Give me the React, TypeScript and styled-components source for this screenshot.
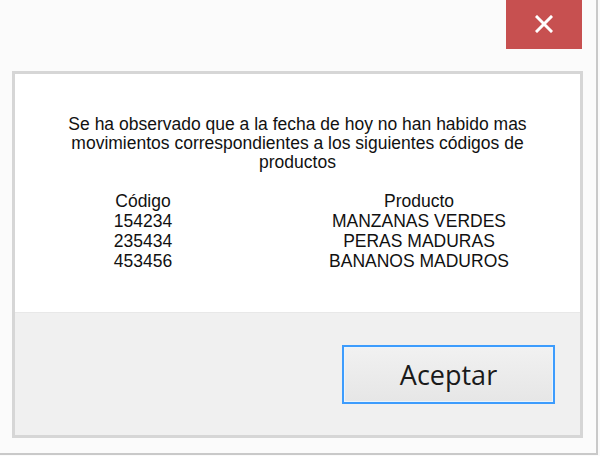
import React from "react";
import styled, { createGlobalStyle } from "styled-components";

const GlobalStyle = createGlobalStyle`
  html, body {
    margin: 0;
    padding: 0;
    background: #fbfbfb;
  }
  body {
    width: 600px;
    height: 456px;
    overflow: hidden;
  }
`;

const rows = [
  { code: "154234", product: "MANZANAS VERDES" },
  { code: "235434", product: "PERAS MADURAS" },
  { code: "453456", product: "BANANOS MADUROS" },
];

const App = () => {
  return (
    <>
      <GlobalStyle />
      <Window>
        <TitleBar>
          <CloseButton aria-label="Cerrar">
            <svg width="18" height="18" viewBox="0 0 18 18">
              <path
                d="M2 2 L16 16 M16 2 L2 16"
                stroke="#fff"
                strokeWidth="3"
                strokeLinecap="square"
              />
            </svg>
          </CloseButton>
        </TitleBar>
        <Panel>
          <MessageArea>
            <Message>
              Se ha observado que a la fecha de hoy no han habido mas
              <br />
              movimientos correspondientes a los siguientes códigos de
              <br />
              productos
            </Message>
            <Table>
              <CodeCell>Código</CodeCell>
              <ProductCell>Producto</ProductCell>
              {rows.map((r) => (
                <React.Fragment key={r.code}>
                  <CodeCell>{r.code}</CodeCell>
                  <ProductCell>{r.product}</ProductCell>
                </React.Fragment>
              ))}
            </Table>
          </MessageArea>
          <Footer>
            <AcceptButton>Aceptar</AcceptButton>
          </Footer>
        </Panel>
      </Window>
    </>
  );
};

export default App;

const Window = styled.div`
  width: 596px;
  height: 453px;
  border-right: 2px solid #c9c9c9;
  border-bottom: 2px solid #c9c9c9;
  background: #fbfbfb;
  box-sizing: content-box;
`;

const TitleBar = styled.div`
  height: 48px;
  display: flex;
  justify-content: flex-end;
  padding-right: 14px;
`;

const CloseButton = styled.div`
  width: 76px;
  height: 49px;
  background: #c75050;
  display: flex;
  align-items: center;
  justify-content: center;
  padding-bottom: 2px;
  box-sizing: border-box;
`;

const Panel = styled.div`
  margin: 23px 0 0 12px;
  width: 571px;
  height: 367px;
  box-sizing: border-box;
  border: 3px solid #d6d6d6;
  display: flex;
  flex-direction: column;
`;

const MessageArea = styled.div`
  height: 239px;
  background: #fff;
  border-bottom: 1px solid #e8e8e8;
  padding-top: 41px;
  box-sizing: border-box;
  font-family: "Liberation Sans", Arial, sans-serif;
  font-size: 17.5px;
  color: #111;
`;

const Message = styled.p`
  margin: 0;
  text-align: center;
  line-height: 19px;
`;

const Table = styled.div`
  display: grid;
  grid-template-columns: 256px 296px;
  grid-auto-rows: 20px;
  margin-top: 19px;
  line-height: 20px;
`;

const CodeCell = styled.div`
  text-align: center;
`;

const ProductCell = styled.div`
  text-align: center;
`;

const Footer = styled.div`
  flex: 1;
  background: #f0f0f0;
  display: flex;
  justify-content: flex-end;
  align-items: flex-start;
  padding: 32px 25px 0 0;
`;

const AcceptButton = styled.button`
  width: 213px;
  height: 59px;
  box-sizing: border-box;
  border: 2px solid #3d9cfd;
  box-shadow: inset 0 0 0 1px #eaf4fd;
  background: linear-gradient(#f1f1f1, #e6e6e6);
  font-family: "Open Sans", "Noto Sans", sans-serif;
  font-size: 27px;
  font-weight: 500;
  color: #1a1a1a;
  padding: 0;
  cursor: pointer;
`;
